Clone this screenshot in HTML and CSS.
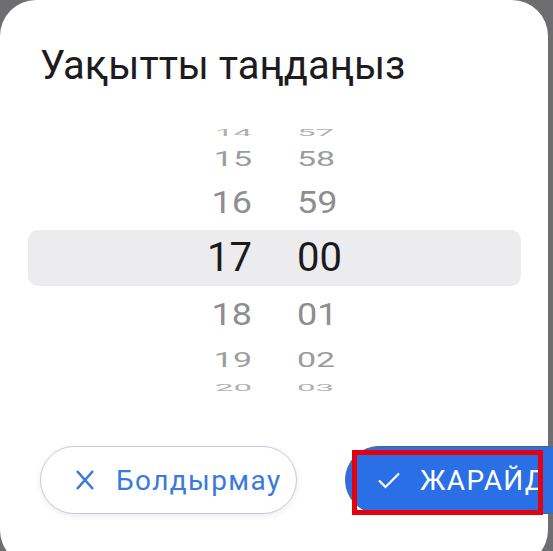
FILE: index.html
```html
<!DOCTYPE html>
<html lang="kk">
<head>
  <meta charset="UTF-8" />
  <meta name="viewport" content="width=device-width, initial-scale=1.0"/>
  <title>Уақытты таңдаңыз</title>
  <link rel="stylesheet" href="styles.css">
</head>
<body>
  <div class="dialog">
    <h1 class="dialog-title">Уақытты таңдаңыз</h1>

    <!-- Time wheel: hours | minutes -->
    <div class="wheel">
      <div class="wheel-row far"><span class="hour">14</span><span class="minute">57</span></div>
      <div class="wheel-row mid"><span class="hour">15</span><span class="minute">58</span></div>
      <div class="wheel-row near"><span class="hour">16</span><span class="minute">59</span></div>
      <div class="wheel-row current"><span class="hour">17</span><span class="minute">00</span></div>
      <div class="wheel-row near below"><span class="hour">18</span><span class="minute">01</span></div>
      <div class="wheel-row mid below"><span class="hour">19</span><span class="minute">02</span></div>
      <div class="wheel-row far below"><span class="hour">20</span><span class="minute">03</span></div>
    </div>

    <div class="actions">
      <button class="btn btn-cancel">
        <svg class="btn-icon" viewBox="0 0 24 24" width="24" height="24">
          <path d="M4 3 L20 21 M20 3 L4 21" fill="none" stroke="currentColor" stroke-width="2.6"/>
        </svg>
        <span>Болдырмау</span>
      </button>
      <button class="btn btn-ok">
        <svg class="btn-icon" viewBox="0 0 24 24" width="24" height="24">
          <path d="M2 12.5 L8.5 19 L22 5.5" fill="none" stroke="currentColor" stroke-width="2.2"/>
        </svg>
        <span class="btn-label">ЖАРАЙДЫ</span>
      </button>
    </div>
  </div>

  <!-- annotation frame -->
  <div class="highlight-box"></div>
</body>
</html>
```

FILE: styles.css
```css
body {
  margin: 0;
  height: 551px;
  overflow: hidden;
  background: #6e6e70;
  font-family: Roboto, "Noto Sans", sans-serif;
  position: relative;
}

.dialog {
  width: 548px;
  height: 566px;
  background: #fff;
  border-radius: 36px;
  box-sizing: border-box;
  padding-top: 42px;
}

.dialog-title {
  margin: 0 0 0 40px;
  font-size: 40px;
  line-height: 48px;
  font-weight: 400;
  color: #1d1b20;
}

/* Wheel */
.wheel {
  margin: 35px 27px 0 28px;
}
.wheel-row {
  display: grid;
  grid-template-columns: 1fr 1fr;
  column-gap: 45px;
  font-size: 40px;
  color: #1a1a1a;
}
.wheel-row span {
  display: block;
}
.wheel-row .hour {
  text-align: right;
  transform-origin: right center;
}
.wheel-row .minute {
  text-align: left;
  transform-origin: left center;
}

.wheel-row.current {
  height: 56px;
  line-height: 56px;
  background: #ececef;
  border-radius: 10px;
}
.wheel-row.near {
  height: 53px;
  line-height: 53px;
  font-size: 36px;
  color: #8e8e8e;
}
.wheel-row.near span { transform: scaleY(0.86); }
.wheel-row.near.below { height: 59px; line-height: 59px; }

.wheel-row.mid {
  height: 36px;
  line-height: 36px;
  font-size: 34px;
  color: #9c9c9c;
}
.wheel-row.mid span { transform: scaleY(0.62); }
.wheel-row.mid.below { height: 30px; line-height: 30px; }

.wheel-row.far {
  height: 16px;
  line-height: 16px;
  font-size: 33px;
  color: #b0b0b0;
}
.wheel-row.far span { transform: scaleY(0.3); }
.wheel-row.far.below { height: 26px; line-height: 26px; }

/* Buttons */
.actions {
  display: flex;
  gap: 48px;
  margin: 45px 0 0 40px;
}
.btn {
  flex: none;
  width: 257px;
  height: 68px;
  border-radius: 34px;
  display: flex;
  align-items: center;
  gap: 19px;
  padding: 0 0 0 32px;
  box-sizing: border-box;
  font-family: Roboto, "Noto Sans", sans-serif;
  font-size: 28px;
  letter-spacing: 1.4px;
  white-space: nowrap;
  overflow: hidden;
  cursor: pointer;
}
.btn-icon {
  flex: none;
}
.btn-cancel {
  background: #fff;
  color: #3a79e0;
  border: 1.5px solid #c9c9dd;
  box-shadow: 0 2px 6px rgba(0, 0, 0, 0.08);
}
.btn-ok {
  background: #2a6fe6;
  color: #fff;
  border: 1.5px solid #56637e;
  padding-left: 31px;
}
/* label runs on under the frame, as in the capture */
.btn-label {
  width: 120px;
  overflow: hidden;
}

/* red annotation frame drawn over the OK button */
.highlight-box {
  position: absolute;
  left: 352px;
  top: 450px;
  width: 191px;
  height: 65px;
  box-sizing: border-box;
  border: 5px solid #e3000f;
}
```
